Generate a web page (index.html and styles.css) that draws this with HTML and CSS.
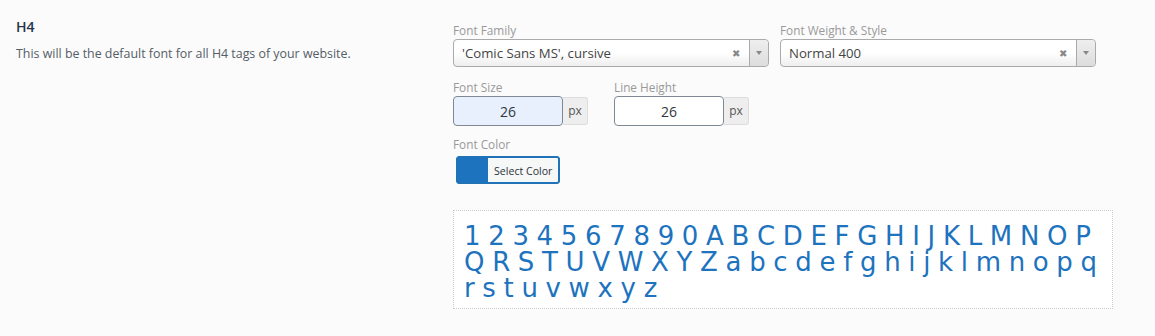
FILE: index.html
```html
<!DOCTYPE html>
<html lang="en">
<head>
    <meta charset="UTF-8">
    <title>Typography - H4</title>
    <link rel="stylesheet" href="styles.css">
</head>
<body>
    <div class="setting-row">
        <div class="setting-info">
            <h4>H4</h4>
            <p>This will be the default font for all H4 tags of your website.</p>
        </div>
        <div class="setting-fields">
            <div class="field-row">
                <div class="field">
                    <label>Font Family</label>
                    <div class="select-box">
                        <span class="select-value">'Comic Sans MS', cursive</span>
                        <span class="select-clear">&#x2716;</span>
                        <span class="select-arrow"><span class="caret"></span></span>
                    </div>
                </div>
                <div class="field">
                    <label>Font Weight &amp; Style</label>
                    <div class="select-box">
                        <span class="select-value">Normal 400</span>
                        <span class="select-clear">&#x2716;</span>
                        <span class="select-arrow"><span class="caret"></span></span>
                    </div>
                </div>
            </div>

            <div class="field-row sizes">
                <div class="field small">
                    <label>Font Size</label>
                    <div class="number-group">
                        <input type="text" class="number-input filled" value="26">
                        <span class="unit">px</span>
                    </div>
                </div>
                <div class="field small">
                    <label>Line Height</label>
                    <div class="number-group">
                        <input type="text" class="number-input" value="26">
                        <span class="unit">px</span>
                    </div>
                </div>
            </div>

            <div class="field">
                <label>Font Color</label>
                <button class="color-button">
                    <span class="swatch"></span>
                    <span class="color-text">Select Color</span>
                </button>
            </div>

            <div class="preview">1 2 3 4 5 6 7 8 9 0 A B C D E F G H I J K L M N O P Q R S T U V W X Y Z a b c d e f g h i j k l m n o p q r s t u v w x y z</div>
        </div>
    </div>
</body>
</html>
```

FILE: styles.css
```css
body {
    margin: 0;
    padding: 0;
    background-color: #fbfbfb;
    font-family: "Open Sans", "Noto Sans", sans-serif;
    font-size: 13px;
    color: #50575e;
}
.setting-row {
    display: flex;
    padding: 14px 16px;
}
.setting-info {
    width: 437px;
    flex-shrink: 0;
}
.setting-info h4 {
    margin: 3px 0 0;
    font-size: 14px;
    font-weight: 600;
    color: #23334a;
    line-height: 20px;
}
.setting-info p {
    margin: 8px 0 0;
    font-size: 12.4px;
    line-height: 18px;
    color: #555d66;
}
.setting-fields {
    width: 660px;
    padding-top: 8px;
}
.field-row {
    display: flex;
    gap: 11px;
    margin-bottom: 12px;
}
.field-row.sizes {
    margin-bottom: 10px;
}
.field-row .field.small {
    margin-right: 15px;
}
.field label {
    display: block;
    font-size: 11.8px;
    line-height: 17px;
    color: #999;
}
.select-box {
    width: 316px;
    height: 28px;
    box-sizing: border-box;
    border: 1px solid #aaa;
    border-radius: 4px;
    background: linear-gradient(#ffffff 50%, #eeeeee);
    display: flex;
    align-items: center;
}
.select-value {
    flex: 1;
    padding-left: 8px;
    font-size: 13.2px;
    color: #444;
}
.select-clear {
    font-size: 10px;
    color: #888;
    margin-right: 9px;
}
.select-arrow {
    width: 18px;
    height: 100%;
    border-left: 1px solid #aaa;
    background: linear-gradient(#eeeeee, #dddddd);
    border-radius: 0 4px 4px 0;
    display: flex;
    align-items: center;
    justify-content: center;
}
.caret {
    border-left: 3px solid transparent;
    border-right: 3px solid transparent;
    border-top: 4px solid #888;
}
.number-group {
    display: flex;
    align-items: center;
}
.number-input {
    width: 110px;
    height: 30px;
    box-sizing: border-box;
    border: 1px solid #7e8993;
    border-radius: 4px;
    background: #fff;
    text-align: center;
    font-family: "Open Sans", "Noto Sans", sans-serif;
    font-size: 14px;
    color: #32373c;
    padding: 0;
}
.number-input.filled {
    background: #e8f0fe;
}
.unit {
    height: 28px;
    width: 25px;
    box-sizing: border-box;
    line-height: 26px;
    text-align: center;
    background: #eeeeee;
    border: 1px solid #dddddd;
    border-left: none;
    border-radius: 0 3px 3px 0;
    font-size: 12px;
    color: #555;
}
.color-button {
    display: flex;
    margin: 3px 0 0 3px;
    padding: 0;
    height: 28px;
    border: 1px solid #2271b1;
    border-radius: 3px;
    background: #1e73be;
    cursor: pointer;
    overflow: hidden;
}
.swatch {
    width: 30px;
    background: #1e73be;
}
.color-text {
    height: 100%;
    box-sizing: border-box;
    padding: 0 6px;
    line-height: 26px;
    background: #f6f7f7;
    border: 1px solid #1e73be;
    border-radius: 0 2px 2px 0;
    font-family: "Open Sans", "Noto Sans", sans-serif;
    font-size: 10.6px;
    color: #2c3338;
}
.preview {
    margin-top: 26px;
    width: 660px;
    box-sizing: border-box;
    border: 1px dotted #ccc;
    background: #fff;
    padding: 12px 14px 7px 10px;
    font-family: "Comic Sans MS", "DejaVu Sans", sans-serif;
    font-size: 26px;
    line-height: 26px;
    letter-spacing: -0.3px;
    color: #1e73be;
}
```
